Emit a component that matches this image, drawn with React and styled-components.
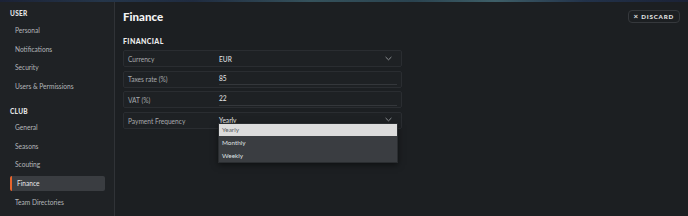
import React from 'react';
import styled, { createGlobalStyle } from 'styled-components';

const GlobalStyle = createGlobalStyle`
  html, body {
    margin: 0;
    padding: 0;
    background: #1c1f22;
    overflow: hidden;
  }
  * {
    box-sizing: border-box;
  }
`;

const Page = styled.div`
  width: 688px;
  height: 216px;
  display: flex;
  flex-direction: column;
  font-family: Lato, 'Open Sans', sans-serif;
  background: #1c1f22;
`;

const TopBand = styled.div`
  height: 2px;
  flex-shrink: 0;
  background: linear-gradient(
    90deg,
    #1b2236 0%,
    #25364a 15%,
    #1f2b40 28%,
    #35525c 45%,
    #2a4350 60%,
    #3e5f68 72%,
    #22324a 85%,
    #1b2236 100%
  );
`;

const Body = styled.div`
  flex: 1;
  display: flex;
  min-height: 0;
`;

const Sidebar = styled.nav`
  width: 115px;
  flex-shrink: 0;
  padding: 7px 9px 0 10px;
  background: #1f2225;
  border-right: 1px solid #303337;
  display: flex;
  flex-direction: column;
`;

const SectionTitle = styled.div`
  height: 10px;
  line-height: 10px;
  font-size: 6.5px;
  font-weight: 900;
  letter-spacing: 0.3px;
  color: #e4e5e6;
  margin-top: ${(p) => p.$top || 0}px;
  margin-bottom: ${(p) => p.$bottom || 0}px;
`;

const NavItem = styled.div`
  height: 15px;
  margin-bottom: 3.7px;
  display: flex;
  align-items: center;
  padding-left: 5px;
  font-size: 6.6px;
  color: ${(p) => (p.$active ? '#e6e7e8' : '#b4b7ba')};
  background: ${(p) => (p.$active ? '#3a3d41' : 'transparent')};
  border-left: ${(p) => (p.$active ? '2px solid #e8642c' : 'none')};
  border-radius: 2px;
`;

const Main = styled.main`
  flex: 1;
  padding: 6px 8px 0 8px;
  display: flex;
  flex-direction: column;
`;

const Header = styled.div`
  display: flex;
  align-items: center;
  justify-content: space-between;
  height: 16px;
`;

const Title = styled.h1`
  margin: 0;
  font-size: 11.5px;
  font-weight: 900;
  color: #f2f3f4;
`;

const DiscardButton = styled.button`
  height: 13px;
  padding: 0 5px 0 5px;
  display: flex;
  align-items: center;
  gap: 3px;
  background: transparent;
  border: 1px solid #35383c;
  border-radius: 4px;
  font-family: inherit;
  font-size: 6.2px;
  font-weight: 900;
  letter-spacing: 0.8px;
  color: #e2e3e4;
`;

const CloseMark = styled.span`
  font-size: 8px;
  font-weight: 700;
  line-height: 1;
  letter-spacing: 0;
`;

const SubTitle = styled.h2`
  margin: 12px 0 4px;
  height: 10px;
  line-height: 10px;
  font-size: 7px;
  font-weight: 900;
  letter-spacing: 0.4px;
  color: #eceded;
`;

const Form = styled.div`
  width: 279px;
  display: flex;
  flex-direction: column;
`;

const Row = styled.div`
  position: relative;
  height: 17px;
  margin-bottom: 3.7px;
  display: flex;
  align-items: center;
  padding: 0 4px;
  background: #1e2124;
  border: 1px solid #2a2d31;
  border-radius: 2px;
`;

const Label = styled.div`
  width: 91px;
  flex-shrink: 0;
  font-size: 6.6px;
  color: #a7aaad;
`;

const Value = styled.div`
  flex: 1;
  display: flex;
  align-items: center;
  justify-content: space-between;
  height: 100%;
  font-size: 6.6px;
  color: #e9eaeb;
  border-bottom: ${(p) => (p.$input ? '1px solid #34373b' : 'none')};
  padding-top: ${(p) => (p.$input ? '1px' : '0')};
  padding-bottom: ${(p) => (p.$raised ? '2px' : '0')};
  margin-bottom: ${(p) => (p.$input ? '3px' : '0')};
`;

const Menu = styled.div`
  position: absolute;
  top: 9.5px;
  left: 94px;
  right: 3px;
  z-index: 2;
  background: #3a3d41;
  border: 1px solid #2a2d30;
  box-shadow: 0 2px 6px rgba(0, 0, 0, 0.5);
`;

const MenuItem = styled.div`
  height: 12.7px;
  display: flex;
  align-items: center;
  padding-left: 3px;
  font-size: 6.4px;
  color: ${(p) => (p.$selected ? '#5a5c5f' : '#dfe0e1')};
  background: ${(p) => (p.$selected ? '#dcdcdc' : 'transparent')};
`;

const Chevron = () => (
  <svg width="7" height="5" viewBox="0 0 7 5" style={{ marginRight: 5 }}>
    <polyline points="0.6,1 3.5,3.8 6.4,1" fill="none" stroke="#9a9da0" strokeWidth="0.9" />
  </svg>
);

const userItems = ['Personal', 'Notifications', 'Security', 'Users & Permissions'];
const clubItems = ['General', 'Seasons', 'Scouting', 'Finance', 'Team Directories'];

const App = () => {
  return (
    <Page>
      <GlobalStyle />
      <TopBand />
      <Body>
        <Sidebar>
          <SectionTitle $bottom={3.5}>USER</SectionTitle>
          {userItems.map((item) => (
            <NavItem key={item}>{item}</NavItem>
          ))}
          <SectionTitle $top={9.7} $bottom={2.5}>CLUB</SectionTitle>
          {clubItems.map((item) => (
            <NavItem key={item} $active={item === 'Finance'}>
              {item}
            </NavItem>
          ))}
        </Sidebar>
        <Main>
          <Header>
            <Title>Finance</Title>
            <DiscardButton>
              <CloseMark>×</CloseMark>
              <span>DISCARD</span>
            </DiscardButton>
          </Header>
          <SubTitle>FINANCIAL</SubTitle>
          <Form>
            <Row>
              <Label>Currency</Label>
              <Value>
                EUR
                <Chevron />
              </Value>
            </Row>
            <Row>
              <Label>Taxes rate (%)</Label>
              <Value $input>85</Value>
            </Row>
            <Row>
              <Label>VAT (%)</Label>
              <Value $input>22</Value>
            </Row>
            <Row>
              <Label>Payment Frequency</Label>
              <Value $raised>
                Yearly
                <Chevron />
              </Value>
              <Menu>
                <MenuItem $selected>Yearly</MenuItem>
                <MenuItem>Monthly</MenuItem>
                <MenuItem>Weekly</MenuItem>
              </Menu>
            </Row>
          </Form>
        </Main>
      </Body>
    </Page>
  );
};

export default App;
